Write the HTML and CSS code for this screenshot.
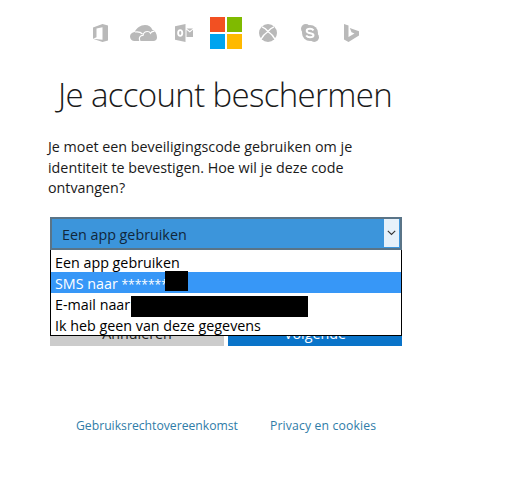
FILE: index.html

```html
<!DOCTYPE html>
<html lang="nl">
<head>
  <meta charset="UTF-8" />
  <meta name="viewport" content="width=device-width, initial-scale=1.0"/>
  <title>Je account beschermen</title>
  <link rel="stylesheet" href="styles.css">
</head>
<body>
  <div class="brands">
    <svg class="brand office" width="15" height="18" viewBox="0 0 15 18"><path d="M0 3.500 9.500 0 15 1.500v15L9.500 18 0 14.800l9.500 1V3.200L3.500 4.600v8.600L0 14.800z"/></svg>
    <svg class="brand onedrive" width="27" height="16" viewBox="0 0 27 16"><path d="M4.500 16C2 16 0 14 0 11.500 0 9 2 7.200 4.700 7 6.500 3 10.500 0 15 0c3.500 0 6.300 2 7.300 4.800C25 5.500 27 9 27 12.500c0 2-1.500 3.500-3.500 3.500z"/><path d="M10 16C8.500 13 10 10.300 13 10.300 13.500 7.800 15.500 6.500 17.500 6.500 19 6.500 20 7.300 20.500 8.200 21.500 6.500 23 6 24.500 6.500M5 7C7.500 6.500 10.500 7 12.500 9" fill="none" stroke="#fff" stroke-width="1.200"/></svg>
    <svg class="brand outlook" width="18" height="18" viewBox="0 0 18 18"><path fill-rule="evenodd" d="M0 2.200 10.500 0v18L0 15.800zM5.200 5.200C3.300 5.200 2.200 6.900 2.200 9s1.100 3.800 3 3.800 3-1.700 3-3.800-1.100-3.800-3-3.800zm0 1.900c.8 0 1.100.9 1.100 1.900s-.3 1.900-1.100 1.900S4.100 10 4.100 9s.3-1.900 1.100-1.900z"/><path d="M11.500 4.500H18l-3.200 2.600zM11.500 5.800l3.300 2.700 3.200-2.700V13h-6.500z"/></svg>
    <svg class="logo" width="32" height="32" viewBox="0 0 32 32">
      <rect width="15" height="15" fill="#f25022"/>
      <rect x="17" width="15" height="15" fill="#7fba00"/>
      <rect y="17" width="15" height="15" fill="#00a4ef"/>
      <rect x="17" y="17" width="15" height="15" fill="#ffb900"/>
    </svg>
    <svg class="brand xbox" width="18" height="18" viewBox="0 0 18 18"><circle cx="9" cy="9" r="9"/><path d="M3 2.800C6 3.800 8 6 9 7.500 10 6 12 3.800 15 2.800M2 15.200C3.500 12 6.500 9.200 9 7.500c2.500 1.700 5.500 4.500 7 7.700" fill="none" stroke="#fff" stroke-width="1.400"/></svg>
    <svg class="brand skype" width="18" height="18" viewBox="0 0 18 18"><circle cx="9" cy="9" r="8"/><circle cx="4.800" cy="4.800" r="4.800"/><circle cx="13.200" cy="13.200" r="4.800"/><path d="M12.500 6.300C11.700 5.200 10.500 4.800 9 4.800c-1.900 0-3.300.9-3.300 2.200 0 3 6.800 1.300 6.800 4.100 0 1.300-1.500 2.200-3.500 2.200-1.700 0-3-.6-3.800-1.800" fill="none" stroke="#fff" stroke-width="2"/></svg>
    <svg class="brand bing" width="15" height="18" viewBox="0 0 15 18"><path d="M0 0 4.500 1.500V13l6-3.500-3-1.300L5.800 4 15 7.300V11.500L4.500 18 0 15.500z"/></svg>
  </div>

  <h1 class="title">Je account beschermen</h1>

  <p class="intro">Je moet een beveiligingscode gebruiken om je identiteit te bevestigen. Hoe wil je deze code ontvangen?</p>

  <div class="picker">
    <div class="select">
      <span class="select-text">Een app gebruiken</span>
      <span class="select-arrow">
        <svg width="9" height="6" viewBox="0 0 9 6"><path d="M.8.800 4.500 4.500 8.200.8" fill="none" stroke="#333" stroke-width="1.100"/></svg>
      </span>
    </div>
    <ul class="options">
      <li class="option">Een app gebruiken</li>
      <li class="option selected">SMS naar <span class="stars">********</span><span class="redact redact-sms"></span></li>
      <li class="option">E-mail naar<span class="redact redact-mail"></span></li>
      <li class="option">Ik heb geen van deze gegevens</li>
    </ul>
  </div>

  <div class="buttons">
    <button class="btn btn-cancel">Annuleren</button>
    <button class="btn btn-next">Volgende</button>
  </div>

  <div class="footer">
    <a href="#">Gebruiksrechtovereenkomst</a>
    <a class="privacy" href="#">Privacy en cookies</a>
  </div>
</body>
</html>
```

FILE: styles.css

```css
body {
  margin: 0;
  padding: 0 0 0 48px;
  width: 354px;
  background: white;
  font-family: "Open Sans", "Noto Sans", sans-serif;
  color: #1a1a1a;
}

.brands {
  display: flex;
  align-items: center;
  margin-left: 45px;
  padding-top: 17px;
  height: 32px;
}

.brand {
  fill: #b9b9b9;
}

.onedrive { margin-left: 22px; }
.outlook { margin-left: 18px; }
.logo { margin-left: 17px; }
.xbox { margin-left: 17px; }
.skype { margin-left: 24px; }
.bing { margin-left: 25px; }

.title {
  margin: 24px 0 0 10px;
  font-size: 33px;
  font-weight: 300;
  line-height: 44px;
  letter-spacing: -0.65px;
  white-space: nowrap;
}

.intro {
  margin: 20px 0 0;
  font-size: 14.3px;
  line-height: 20.500px;
}

.picker {
  position: relative;
  margin: 18px 0 0 2px;
  width: 352px;
}

.select {
  display: flex;
  align-items: center;
  justify-content: space-between;
  box-sizing: border-box;
  height: 33px;
  padding: 0 1px 0 10px;
  background: #3c95db;
  border: 2px solid #5a7487;
  color: #10263a;
  font-size: 14.3px;
}

.select-text {
  padding-top: 2px;
}

.select-arrow {
  display: flex;
  align-items: center;
  justify-content: center;
  width: 15px;
  height: 28px;
  background: #e6f1fa;
}

.options {
  position: absolute;
  left: 0;
  right: 0;
  top: 33px;
  margin: 0;
  padding: 1px 0 0;
  list-style: none;
  background: white;
  border: 1px solid black;
  border-top: none;
  font-size: 14.3px;
}

.option {
  position: relative;
  height: 21px;
  line-height: 23px;
  padding-left: 4px;
  color: black;
  white-space: nowrap;
}

.selected {
  background: #3797f7;
  color: white;
}

.stars {
  font-size: 12px;
}

.redact {
  position: absolute;
  background: black;
}

.redact-sms {
  left: 114px;
  top: -1px;
  width: 23px;
  height: 20px;
}

.redact-mail {
  left: 80px;
  top: 3px;
  width: 177px;
  height: 21px;
}

.buttons {
  display: flex;
  gap: 4px;
  margin: 68px 0 0 2px;
  width: 352px;
}

.btn {
  flex: 1;
  height: 28px;
  padding: 4px 0 0;
  border: none;
  font-family: inherit;
  font-size: 14.3px;
}

.btn-cancel {
  background: #cccccc;
  color: #222;
}

.btn-next {
  background: #0a74c9;
  color: white;
}

.footer {
  display: flex;
  gap: 32px;
  margin: 71px 0 0 28px;
  font-size: 12.2px;
}

.footer a {
  color: #2f7ca8;
  text-decoration: none;
}

.footer .privacy {
  letter-spacing: 0.15px;
}
```
